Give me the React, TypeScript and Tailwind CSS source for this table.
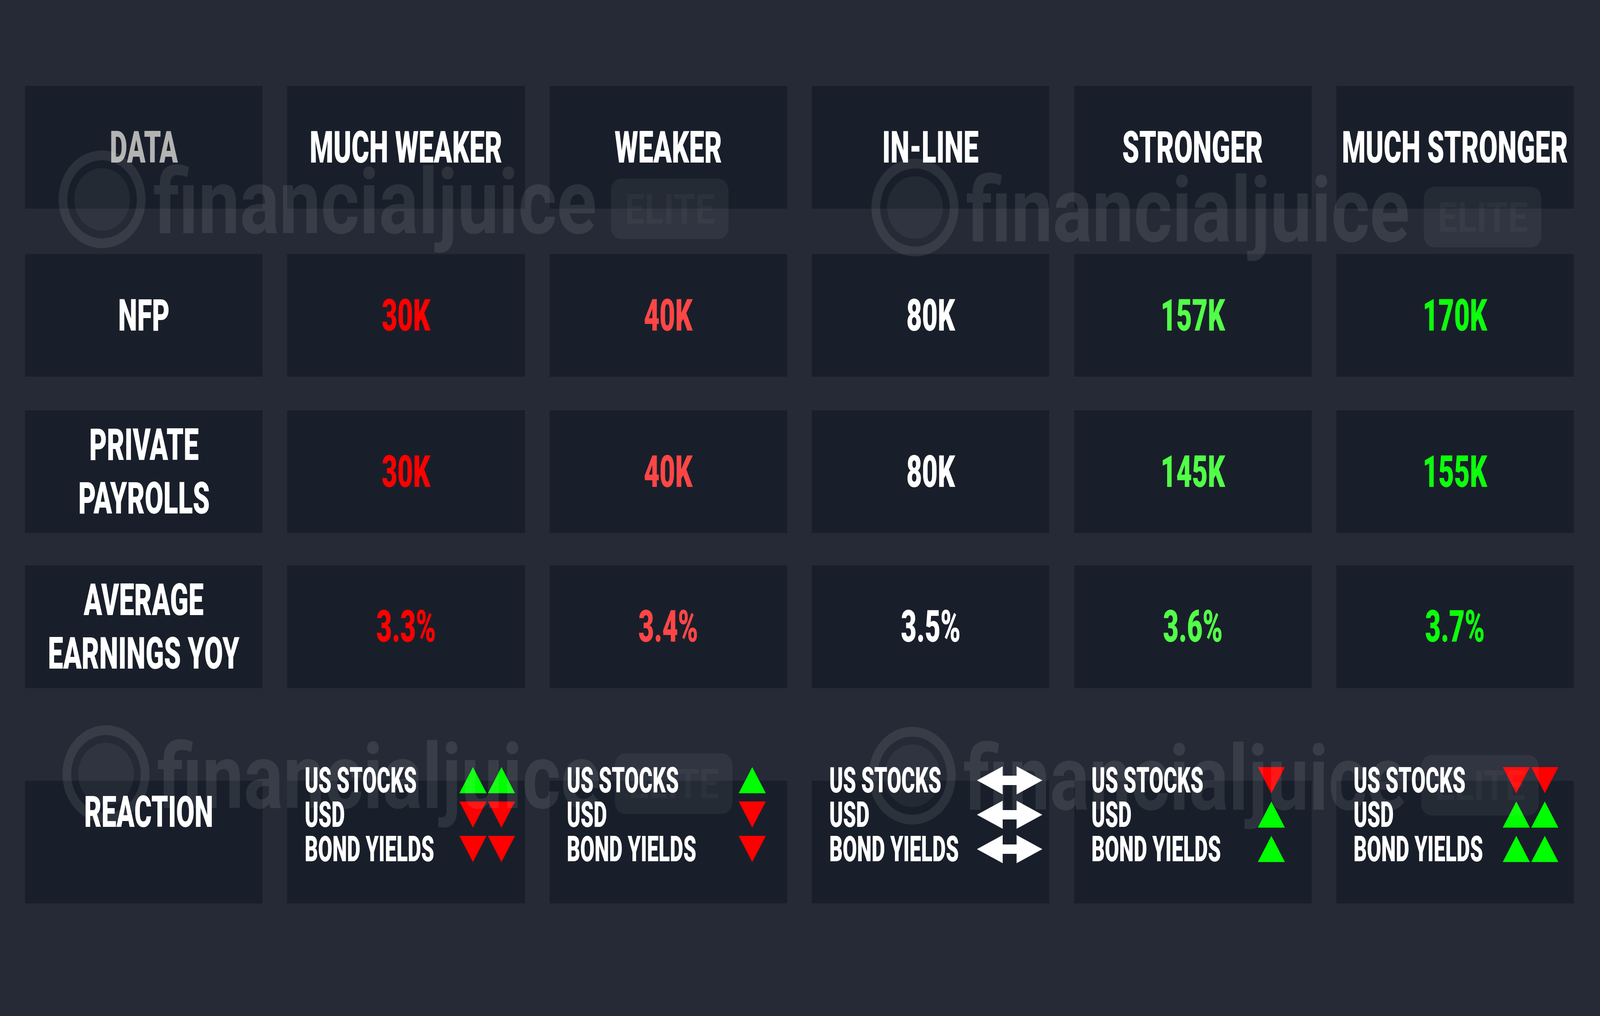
import React from "react";

type Icon = "up" | "down" | "arrow";

const headers = ["MUCH WEAKER", "WEAKER", "IN-LINE", "STRONGER", "MUCH STRONGER"];

const rows = [
  { label: ["NFP"], values: ["30K", "40K", "80K", "157K", "170K"], gap: "mt-[4.462vh]" },
  { label: ["PRIVATE", "PAYROLLS"], values: ["30K", "40K", "80K", "145K", "155K"], gap: "mt-[3.308vh]" },
  { label: ["AVERAGE", "EARNINGS YOY"], values: ["3.3%", "3.4%", "3.5%", "3.6%", "3.7%"], gap: "mt-[3.192vh]" },
];

const valueColors = [
  "text-[#ff0000]",
  "text-[#ff4646]",
  "text-white",
  "text-[#52ff48]",
  "text-[#0dff0d]",
];

const reactions: { icons: Icon[]; count: number; pr: string }[] = [
  { icons: ["up", "down", "down"], count: 2, pr: "pr-[0.174vw]" },
  { icons: ["up", "down", "down"], count: 1, pr: "pr-0" },
  { icons: ["arrow", "arrow", "arrow"], count: 1, pr: "pr-[0.304vw]" },
  { icons: ["down", "up", "up"], count: 1, pr: "pr-[0.348vw]" },
  { icons: ["down", "up", "up"], count: 2, pr: "pr-[0.543vw]" },
];

const assets = ["US STOCKS", "USD", "BOND YIELDS"];

const ROW = "grid grid-cols-[repeat(6,14.848vw)] gap-x-[1.543vw]";

function Triangle({ dir }: { dir: "up" | "down" }) {
  return (
    <svg className="shrink-0 w-[1.696vw] h-[2.577vh]" viewBox="0 0 78 67" preserveAspectRatio="none">
      {dir === "up" ? (
        <polygon points="39,0 78,67 0,67" fill="#00ff00" />
      ) : (
        <polygon points="0,0 78,0 39,67" fill="#ff0000" />
      )}
    </svg>
  );
}

function DoubleArrow() {
  return (
    <svg className="shrink-0 w-[4.087vw] h-[2.769vh]" viewBox="0 0 188 72" preserveAspectRatio="none">
      <polygon
        points="0,36 74,0 74,24 114,24 114,0 188,36 114,72 114,48 74,48 74,72"
        fill="#ffffff"
      />
    </svg>
  );
}

function Box({ children, className = "" }: { children?: React.ReactNode; className?: string }) {
  return <div className={`h-[12.077vh] min-w-0 bg-[#191f2a] flex ${className}`}>{children}</div>;
}

function Big({ lines, color = "text-white" }: { lines: string[]; color?: string }) {
  return (
    <div className={`scale-x-(--sx) text-center text-[4.385vh] leading-[5.269vh] font-black ${color}`}>
      {lines.map((l) => (
        <div key={l} className="whitespace-nowrap">
          {l}
        </div>
      ))}
    </div>
  );
}

function Watermark({ className }: { className: string }) {
  return (
    <svg
      className={`absolute pointer-events-none overflow-visible w-[41.957vw] h-[10.769vh] ${className}`}
      viewBox="0 0 1930 280"
      preserveAspectRatio="none"
    >
      <circle cx="125" cy="125" r="112.5" fill="none" stroke="#ffffff" strokeOpacity="0.085" strokeWidth="25" />
      <circle cx="125" cy="125" r="80" fill="#ffffff" fillOpacity="0.05" />
      <text
        x="272"
        y="212"
        fontFamily="Roboto, 'Liberation Sans', sans-serif"
        fontWeight="700"
        fontSize="232"
        fill="#ffffff"
        fillOpacity="0.09"
        textLength="1275"
        lengthAdjust="spacingAndGlyphs"
      >
        financialjuice
      </text>
      <rect x="1588" y="72" width="338" height="155" rx="30" fill="#ffffff" fillOpacity="0.055" />
      <text
        x="1628"
        y="187"
        fontFamily="Roboto, 'Liberation Sans', sans-serif"
        fontWeight="700"
        fontSize="105"
        fill="#ffffff"
        fillOpacity="0.035"
        textLength="259"
        lengthAdjust="spacingAndGlyphs"
      >
        ELITE
      </text>
    </svg>
  );
}

export default function App() {
  // the artwork is 4600x2600; text is condensed by the ratio of the frame's horizontal and vertical scale
  const r = window.innerWidth / 4600 / (window.innerHeight / 2600);
  const vars = { "--sx": (0.683 * r).toFixed(4), "--sx2": (0.663 * r).toFixed(4) } as React.CSSProperties;

  return (
    <div
      style={vars}
      className="relative w-screen h-screen overflow-hidden bg-[#252a36] font-['Roboto','Liberation_Sans',sans-serif] pl-[1.565vw] pt-[8.462vh]"
    >
      {/* Header row */}
      <div className={ROW}>
        <Box className="items-center justify-center">
          <Big lines={["DATA"]} color="text-[#b3b3b3]" />
        </Box>
        {headers.map((h) => (
          <Box key={h} className="items-center justify-center">
            <Big lines={[h]} />
          </Box>
        ))}
      </div>

      {/* Data rows */}
      {rows.map((row) => (
        <div key={row.label.join(" ")} className={`${ROW} ${row.gap}`}>
          <Box className="items-center justify-center">
            <Big lines={row.label} />
          </Box>
          {row.values.map((v, i) => (
            <Box key={i} className="items-center justify-center">
              <Big lines={[v]} color={valueColors[i]} />
            </Box>
          ))}
        </div>
      ))}

      {/* Reaction row */}
      <div className={`${ROW} mt-[9.115vh]`}>
        <Box className="items-start justify-center pt-[0.923vh] pl-[0.609vw]">
          <span className="inline-block scale-x-(--sx) text-[4.308vh] leading-none font-black text-white">
            REACTION
          </span>
        </Box>
        {reactions.map((re, ci) => (
          <Box key={ci} className="items-start">
            <div className={`-mt-[1.731vh] flex w-full min-w-0 pl-[1.087vw] ${re.pr}`}>
              <div className="flex-1 min-w-0 text-[3.462vh] leading-[3.385vh] font-black text-white">
                {assets.map((a) => (
                  <div key={a} className="h-[3.385vh] whitespace-nowrap">
                    <span className="inline-block origin-left scale-x-(--sx2)">{a}</span>
                  </div>
                ))}
              </div>
              <div className="shrink-0 w-[4.348vw] flex flex-col items-center">
                {re.icons.map((ic, ii) => (
                  <div key={ii} className="h-[3.385vh] flex items-center gap-[0.087vw]">
                    {ic === "arrow" ? (
                      <DoubleArrow />
                    ) : (
                      Array.from({ length: re.count }).map((_, k) => <Triangle key={k} dir={ic} />)
                    )}
                  </div>
                ))}
              </div>
            </div>
          </Box>
        ))}
      </div>

      <Watermark className="left-[3.674vw] top-[14.808vh]" />
      <Watermark className="left-[54.457vw] top-[15.615vh]" />
      <Watermark className="left-[3.913vw] top-[71.385vh]" />
      <Watermark className="left-[54.304vw] top-[71.538vh]" />
    </div>
  );
}
